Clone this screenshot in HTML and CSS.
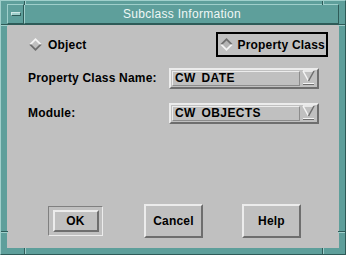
FILE: index.html
```html
<!DOCTYPE html>
<html lang="en">
<head>
    <meta charset="UTF-8">
    <meta name="viewport" content="width=device-width, initial-scale=1.0">
    <title>Subclass Information</title>
    <link rel="stylesheet" href="styles.css">
</head>
<body>
    <div class="window">
        <span class="notch notch-top-left"></span>
        <span class="notch notch-top-right"></span>
        <span class="notch notch-bottom-left"></span>
        <span class="notch notch-bottom-right"></span>
        <span class="notch notch-left-top"></span>
        <span class="notch notch-right-top"></span>
        <span class="notch notch-left-bottom"></span>
        <span class="notch notch-right-bottom"></span>

        <div class="titlebar">
            <div class="menu-btn"><span class="menu-bar"></span></div>
            <div class="title">Subclass Information</div>
        </div>

        <div class="dialog">
            <div class="choice-row">
                <div class="radio">
                    <svg class="diamond" width="13" height="13" viewBox="0 0 13 13">
                        <polygon points="6.5,0 13,6.5 0,6.5" fill="#f4f4f4"/>
                        <polygon points="0,6.5 13,6.5 6.5,13" fill="#6e6e6e"/>
                        <polygon points="6.5,2.5 10.5,6.5 6.5,10.5 2.5,6.5" fill="#c0c0c0"/>
                    </svg>
                    <span>Object</span>
                </div>
                <div class="radio radio-selected">
                    <svg class="diamond" width="13" height="13" viewBox="0 0 13 13">
                        <polygon points="6.5,0 13,6.5 0,6.5" fill="#6e6e6e"/>
                        <polygon points="0,6.5 13,6.5 6.5,13" fill="#f4f4f4"/>
                        <polygon points="6.5,2.5 10.5,6.5 6.5,10.5 2.5,6.5" fill="#b4b4b4"/>
                    </svg>
                    <span>Property Class</span>
                </div>
            </div>

            <div class="form">
                <span class="label">Property Class Name:</span>
                <div class="combo">
                    <span class="combo-field">CW DATE</span>
                    <svg class="combo-arrow" width="13" height="17" viewBox="0 0 13 17">
                        <polygon points="1,1 12,1 6.5,11" fill="#c0c0c0"/>
                        <polyline points="1,1 12,1" stroke="#f4f4f4" stroke-width="1.5" fill="none"/>
                        <polyline points="1,1 6.5,11" stroke="#f4f4f4" stroke-width="1.5" fill="none"/>
                        <polyline points="12,1 6.5,11" stroke="#6e6e6e" stroke-width="1.5" fill="none"/>
                        <rect x="1" y="13" width="11" height="1" fill="#f4f4f4"/>
                        <rect x="1" y="14" width="11" height="1" fill="#6e6e6e"/>
                    </svg>
                </div>

                <span class="label">Module:</span>
                <div class="combo">
                    <span class="combo-field">CW OBJECTS</span>
                    <svg class="combo-arrow" width="13" height="17" viewBox="0 0 13 17">
                        <polygon points="1,1 12,1 6.5,11" fill="#c0c0c0"/>
                        <polyline points="1,1 12,1" stroke="#f4f4f4" stroke-width="1.5" fill="none"/>
                        <polyline points="1,1 6.5,11" stroke="#f4f4f4" stroke-width="1.5" fill="none"/>
                        <polyline points="12,1 6.5,11" stroke="#6e6e6e" stroke-width="1.5" fill="none"/>
                        <rect x="1" y="13" width="11" height="1" fill="#f4f4f4"/>
                        <rect x="1" y="14" width="11" height="1" fill="#6e6e6e"/>
                    </svg>
                </div>
            </div>

            <div class="actions">
                <div class="default-ring">
                    <button class="btn btn-ok">OK</button>
                </div>
                <button class="btn btn-big btn-cancel">Cancel</button>
                <button class="btn btn-big btn-help">Help</button>
            </div>
        </div>
    </div>
</body>
</html>
```

FILE: styles.css
```css
* {
    margin: 0;
    padding: 0;
    box-sizing: border-box;
}

body {
    font-family: 'Liberation Sans', Arial, sans-serif;
    background: #5e9f9b;
    width: 346px;
    height: 255px;
    overflow: hidden;
}

.window {
    position: relative;
    width: 346px;
    height: 255px;
    background: #5e9f9b;
    border: 1px solid;
    border-color: #9fcfcb #2e5b58 #2e5b58 #9fcfcb;
    padding: 3px 6px 6px 6px;
    display: flex;
    flex-direction: column;
}

/* resize handle marks on the frame */
.notch {
    position: absolute;
    background: #2e5b58;
}

.notch-top-left,
.notch-top-right {
    top: 0;
    width: 1px;
    height: 4px;
    box-shadow: 1px 0 0 #9fcfcb;
}

.notch-bottom-left,
.notch-bottom-right {
    bottom: 0;
    width: 1px;
    height: 6px;
    box-shadow: 1px 0 0 #9fcfcb;
}

.notch-top-left,
.notch-bottom-left {
    left: 23px;
}

.notch-top-right,
.notch-bottom-right {
    left: 321px;
}

.notch-left-top,
.notch-left-bottom {
    left: 0;
    width: 7px;
    height: 1px;
    box-shadow: 0 1px 0 #9fcfcb;
}

.notch-right-top,
.notch-right-bottom {
    right: 0;
    width: 7px;
    height: 1px;
    box-shadow: 0 1px 0 #9fcfcb;
}

.notch-left-top,
.notch-right-top {
    top: 23px;
}

.notch-left-bottom,
.notch-right-bottom {
    top: 230px;
}

.titlebar {
    display: flex;
    height: 20px;
    flex-shrink: 0;
}

.menu-btn {
    width: 17px;
    border: 1px solid;
    border-color: #9fcfcb #2e5b58 #2e5b58 #9fcfcb;
    display: flex;
    align-items: center;
    justify-content: center;
}

.menu-bar {
    width: 10px;
    height: 4px;
    background: #9fcfcb;
    border: 1px solid;
    border-color: #cfe8e6 #2e5b58 #2e5b58 #cfe8e6;
}

.title {
    flex: 1;
    border: 1px solid;
    border-color: #9fcfcb #2e5b58 #2e5b58 #9fcfcb;
    color: #eef7f6;
    font-size: 12px;
    letter-spacing: 0.3px;
    line-height: 18px;
    text-align: center;
    padding-left: 1px;
}

.dialog {
    flex: 1;
    background: #c0c0c0;
    border-top: 1px solid #2e5b58;
    display: flex;
    flex-direction: column;
    font-weight: bold;
    font-size: 12px;
    letter-spacing: 0.2px;
    color: #000;
}

.choice-row {
    display: flex;
    justify-content: space-between;
    align-items: center;
    height: 25px;
    margin-top: 7px;
    padding-left: 22px;
    padding-right: 11px;
}

.radio {
    display: flex;
    align-items: center;
    gap: 6px;
    height: 25px;
    white-space: nowrap;
}

.radio-selected {
    border: 2px solid #000;
    padding: 0 1px 0 2px;
    gap: 4px;
}

.diamond {
    display: block;
    flex-shrink: 0;
}

.form {
    display: grid;
    grid-template-columns: 141px 150px;
    grid-auto-rows: 21px;
    row-gap: 14px;
    margin-top: 11px;
    padding-left: 21px;
    align-items: center;
}

.label {
    line-height: 21px;
    white-space: nowrap;
}

.combo {
    height: 21px;
    display: flex;
    align-items: center;
    border: 2px solid;
    border-color: #ececec #6e6e6e #6e6e6e #ececec;
    padding: 1px 2px 1px 1px;
}

.combo-field {
    flex: 1;
    height: 100%;
    border: 1px solid;
    border-color: #ececec #8c8c8c #8c8c8c #ececec;
    line-height: 13px;
    padding-left: 2px;
    letter-spacing: 0.4px;
    word-spacing: 2px;
    white-space: nowrap;
}

.combo-arrow {
    display: block;
    margin-left: 2px;
}

.actions {
    display: flex;
    align-items: center;
    margin-top: 80px;
    padding-left: 41px;
}

.default-ring {
    width: 55px;
    height: 30px;
    border: 1px solid;
    border-color: #808080 #ececec #ececec #808080;
    display: flex;
    align-items: center;
    justify-content: center;
}

.btn {
    font-family: 'Liberation Sans', Arial, sans-serif;
    font-weight: bold;
    font-size: 12px;
    letter-spacing: 0.2px;
    color: #000;
    background: #c0c0c0;
    border: 2px solid;
    border-color: #ececec #6e6e6e #6e6e6e #ececec;
    cursor: pointer;
}

.btn-ok {
    width: 46px;
    height: 22px;
}

.btn-big {
    width: 59px;
    height: 34px;
}

.btn-cancel {
    margin-left: 41px;
}

.btn-help {
    margin-left: 39px;
}
```
